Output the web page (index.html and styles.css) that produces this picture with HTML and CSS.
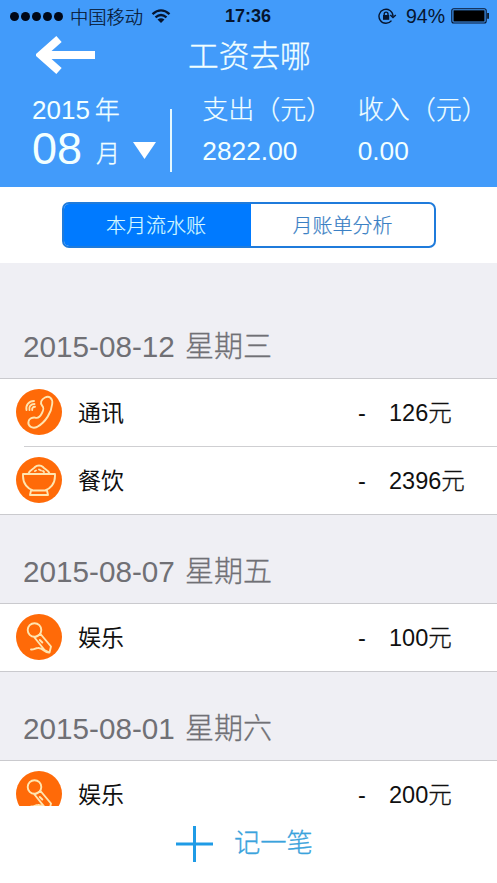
FILE: index.html
```html
<!DOCTYPE html>
<html lang="zh-CN">
<head>
<meta charset="utf-8">
<title>工资去哪</title>
<link rel="stylesheet" href="styles.css">
</head>
<body>
<svg class="defs" aria-hidden="true">
  <symbol id="mic" viewBox="0 0 46 46">
    <circle cx="18.5" cy="16" r="6.8"/>
    <path d="M24.500 20L35 32.500L33.500 38.500L28.500 36L18.500 23.500M18.500 23.500L24.500 20M23.800 26L26.300 28.500M33.500 38.500C29 39.500 27 33.500 22 34C19 34 18 36 15 35.500"/>
  </symbol>
</svg>
<div class="app">
  <header class="header">
    <div class="status">
      <div class="signal"><i></i><i></i><i></i><i></i><i></i></div>
      <span class="carrier">中国移动</span>
      <svg class="wifi" viewBox="0 0 20 15" width="20" height="15"><path d="M1.5 5.2Q10 -2.4 18.5 5.2M4.5 8.4Q10 3.6 15.5 8.4"/><path class="fill" d="M6.5 10.6Q10 7.8 13.5 10.6L10 14Z"/></svg>
      <span class="time">17:36</span>
      <svg class="lock" viewBox="0 0 19 16" width="19" height="16"><path d="M13.5 12.6A7 7 0 1 1 15 8M12.3 7L15 9.5L17.8 7M6.2 7.5V6A1.9 1.9 0 0 1 10 6V7.5"/><rect x="5" y="7" width="6.2" height="4.8"/></svg>
      <span class="percent">94%</span>
      <svg class="battery" viewBox="0 0 39 16" width="39" height="16"><rect class="shell" x=".8" y=".8" width="34.4" height="14.2" rx="2"/><rect x="2.5" y="2.3" width="31" height="11.2"/><path d="M36.3 5H37.8V10.8H36.3Z"/></svg>
    </div>
    <div class="nav">
      <svg class="back" viewBox="0 0 60 38" width="60" height="38"><path d="M59 19H6M23 3L5 19L23 35"/></svg>
      <h1>工资去哪</h1>
    </div>
    <div class="summary">
      <div class="date">
        <div class="year"><span>2015</span><b>年</b></div>
        <div class="month"><span>08</span><b>月</b><i class="caret"></i></div>
      </div>
      <div class="total spend"><div class="label">支出（元）</div><div class="value">2822.00</div></div>
      <div class="total"><div class="label">收入（元）</div><div class="value">0.00</div></div>
    </div>
  </header>
  <div class="tabs">
    <div class="segmented"><span class="active">本月流水账</span><span>月账单分析</span></div>
  </div>
  <main class="list">
    <h2 class="first">2015-08-12 <span>星期三</span></h2>
    <div class="group">
      <div class="row">
        <svg class="icon" viewBox="0 0 46 46"><path d="M29 8.5C33 6.5 37 9 36.2 15C35.5 23 30 33 21 38C16 40 11.500 37 12.500 32.500C13 29.500 17 28 20 28.800C22 29.300 24 28 26 24C28 20 28 18.500 26 16.500C24 14 25 10.500 29 8.500Z"/><path d="M10.500 21C9.500 16 13 12 18 12M13.500 21C12.500 17.500 15 15 18.500 15M16.200 21C15.800 19 17 17.800 19 17.800"/></svg>
        <span class="name">通讯</span><span class="minus">-</span><span class="amount">126<b>元</b></span>
      </div>
      <div class="row">
        <svg class="icon" viewBox="0 0 46 46"><path d="M7 17H39V19C39 27 34 32 29 33.500H17C12 32 7 27 7 19ZM12.500 16.500C14 12.500 18 12 19 10C21 8 25 8 27 10C28 12 32 12.500 33.500 16.500M15 33.500L14 38H32L31 33.500M19 14L20 13.500M23 12.500L25 13.500M27 14L28 15"/></svg>
        <span class="name">餐饮</span><span class="minus">-</span><span class="amount">2396<b>元</b></span>
      </div>
    </div>
    <h2>2015-08-07 <span>星期五</span></h2>
    <div class="group">
      <div class="row">
        <svg class="icon"><use href="#mic"/></svg>
        <span class="name">娱乐</span><span class="minus">-</span><span class="amount">100<b>元</b></span>
      </div>
    </div>
    <h2>2015-08-01 <span>星期六</span></h2>
    <div class="group">
      <div class="row">
        <svg class="icon"><use href="#mic"/></svg>
        <span class="name">娱乐</span><span class="minus">-</span><span class="amount">200<b>元</b></span>
      </div>
    </div>
  </main>
  <footer class="footer">
    <svg class="plus" viewBox="0 0 37 36" width="37" height="36"><path d="M0 18H37M18.500 0V36"/></svg>
    <span>记一笔</span>
  </footer>
</div>
</body>
</html>
```
FILE: styles.css
```css
* { box-sizing: border-box; }
body {
  margin: 0;
  font-family: "Liberation Sans", "Noto Sans CJK SC", sans-serif;
  background: #fff;
}
b { font-weight: 300; -webkit-text-stroke: .3px currentColor; }
i { font-style: normal; }
svg { display: block; flex: none; }
.defs { position: absolute; width: 0; height: 0; }
.app { width: 497px; height: 883px; display: flex; flex-direction: column; overflow: hidden; }

.header { height: 187px; flex: none; background: #429bfa; color: #f2ffff; }
.status { height: 32px; display: flex; align-items: center; padding-left: 10px; color: #06152f; white-space: nowrap; }
.signal { display: flex; gap: 2px; width: 60px; }
.signal i { width: 9px; height: 9px; border-radius: 50%; background: #000818; }
.carrier { width: 80px; font: 300 18.300px/32px "Noto Sans CJK SC", sans-serif; -webkit-text-stroke: .2px currentColor; }
.wifi { width: 20px; margin-left: 1px; fill: none; stroke: #06152f; stroke-width: 2.3; }
.wifi .fill { fill: #06152f; stroke: none; }
.time { width: 153px; padding-left: 54px; font-weight: bold; font-size: 18px; line-height: 32px; }
.lock { margin-left: 54px; fill: none; stroke: #06152f; stroke-width: 1.4; }
.lock rect { fill: #06152f; stroke: none; }
.percent { width: 45px; margin-left: 9px; font-size: 19.500px; line-height: 32px; }
.battery { fill: #000; }
.battery .shell { fill: none; stroke: #06152f; stroke-width: 1.1; }

.nav { height: 50px; display: flex; padding: 4px 0 0 36px; }
.back { fill: none; stroke: #fff; stroke-width: 8; }
h1 { margin: -4px 0 0 92px; font: 300 30.700px/44px "Noto Sans CJK SC", sans-serif; white-space: nowrap; -webkit-text-stroke: .3px currentColor; }

.summary { display: flex; padding: 12px 0 0 32px; white-space: nowrap; }
.date { width: 141px; height: 93px; }
.year { display: flex; height: 33px; line-height: 32px; font-size: 26px; }
.year b { margin-left: 5px; font-size: 25px; }
.month { display: flex; height: 44px; line-height: 44px; font-size: 45px; }
.month span { width: 64px; }
.month b { font-size: 24px; line-height: 54px; }
.caret { width: 23px; height: 17px; margin: 15px 0 0 13px; background: #fff; clip-path: polygon(0 0, 100% 0, 50% 100%); }
.total { width: 140px; }
.spend { width: 186px; padding-left: 30px; position: relative; }
.spend::before { content: ""; position: absolute; left: -2px; top: 15px; width: 2px; height: 63px; background: #e4f8ff; }
.label { font-size: 26px; font-weight: 300; line-height: 32px; height: 41px; -webkit-text-stroke: .2px currentColor; }
.value { font-size: 26.300px; line-height: 32px; }

.tabs { height: 76px; flex: none; padding: 15px 62px; }
.segmented { display: flex; width: 374px; height: 46px; border: 2px solid #1f7bdb; border-radius: 7px; overflow: hidden; }
.segmented span { flex: 1; text-align: center; color: #3a80c4; font: 300 20px/41px "Noto Sans CJK SC", sans-serif; -webkit-text-stroke: .2px currentColor; }
.segmented .active { flex: 0 0 187px; padding-right: 3px; background: #007aff; color: #d5f8ff; }

.list { height: 543px; flex: none; overflow: hidden; background: #efeff4; }
h2 { margin: 0; height: 88px; padding: 33px 0 0 23px; font-size: 29.700px; font-weight: 400; line-height: 48px; color: #707075; white-space: nowrap; }
h2.first { height: 115px; padding-top: 60px; }
h2 span { margin-left: 2px; font-size: 29px; font-weight: 300; -webkit-text-stroke: .3px currentColor; }
.group { background: #fff; border: solid #cacace; border-width: 1px 0; }
.row { display: flex; align-items: center; height: 67px; padding-left: 16px; font-size: 23.500px; line-height: 34px; color: #101010; position: relative; }
.row + .row { height: 68px; padding-top: 1px; }
.row + .row::before { content: ""; position: absolute; top: 0; left: 24px; right: 0; height: 1px; background: #cfcfd2; }
.icon { width: 46px; height: 46px; margin-bottom: 1px; border-radius: 50%; background: #ff6a08; fill: none; stroke: #ffe5b0; stroke-width: 1.900; stroke-linejoin: round; stroke-linecap: round; }
.name { width: 280px; margin: 0 0 4px 16px; font-family: "Noto Sans CJK SC", sans-serif; font-size: 23px; font-weight: 400; line-height: 30px; }
.minus { width: 31px; }
.amount { white-space: nowrap; }

.footer { flex: 1; display: flex; background: #fff; padding: 20px 0 0 176px; color: #3aa3dc; }
.plus { fill: none; stroke: #1f9be6; stroke-width: 3; }
.footer span { margin-left: 21px; font: 300 26.300px/30px "Noto Sans CJK SC", sans-serif; -webkit-text-stroke: .3px currentColor; }
```
